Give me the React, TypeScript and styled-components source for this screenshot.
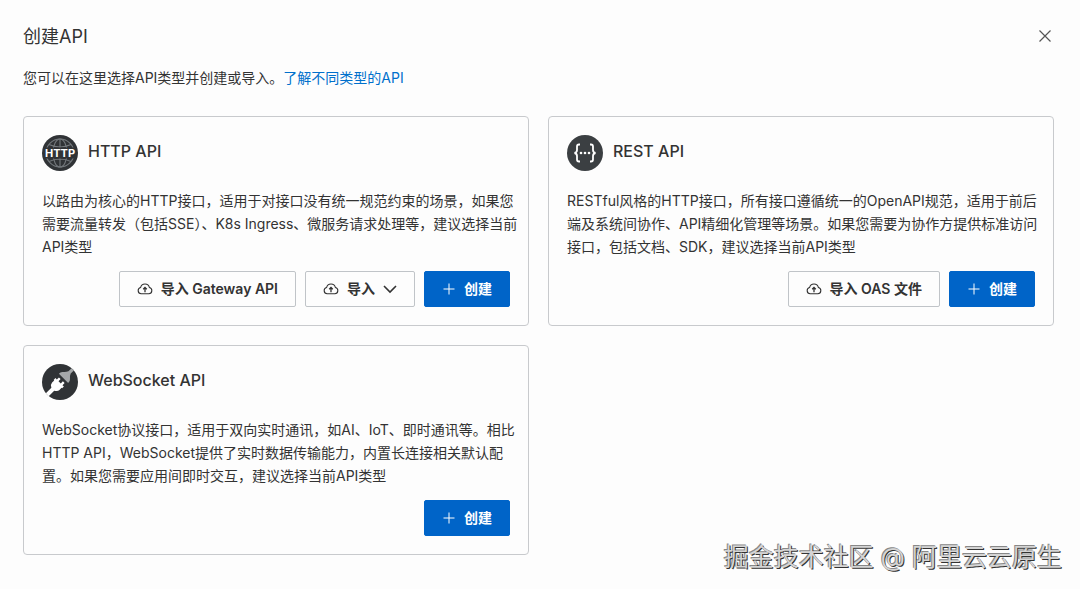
import React from "react";
import styled, { createGlobalStyle } from "styled-components";

const GlobalStyle = createGlobalStyle`
  * { box-sizing: border-box; }
  body {
    margin: 0;
    background: #fdfdfd;
    color: #333;
    font-family: Inter, "Noto Sans CJK SC", sans-serif;
    font-size: 14px;
    line-height: 23px;
  }
`;

const Panel = styled.main`
  position: relative;
  padding: 25px 26px 34px 23px;
`;

const Header = styled.header`
  display: flex;
  align-items: flex-start;
  justify-content: space-between;
`;

const Title = styled.h1`
  margin: 0;
  font-size: 18px;
  font-weight: 400;
  line-height: 24px;
`;

const CloseButton = styled.button`
  display: flex;
  padding: 4px 2px;
  border: 0;
  background: none;
  color: #555;
  cursor: pointer;
`;

const Intro = styled.p`
  margin: 17px 0 27px;
  white-space: nowrap;
`;

const Link = styled.a`
  color: #0070cc;
  text-decoration: none;
`;

const Grid = styled.div`
  display: grid;
  grid-template-columns: repeat(2, minmax(0, 1fr));
  gap: 19px;
`;

const Card = styled.section`
  display: flex;
  flex-direction: column;
  padding: 18px;
  border: 1px solid #c8cacd;
  border-radius: 4px;
`;

const CardHead = styled.div`
  display: flex;
  gap: 10px;
  height: 37px;
`;

const CardTitle = styled.h2`
  margin: 4px 0 0;
  font-size: 16px;
  font-weight: 500;
  line-height: 24px;
`;

const Description = styled.p`
  margin: 17px 0 13px;
  white-space: pre;
`;

const Actions = styled.div`
  display: flex;
  justify-content: flex-end;
  gap: 9px;
`;

const Button = styled.button<{ $primary?: boolean }>`
  display: flex;
  align-items: center;
  gap: 8px;
  height: 36px;
  padding: 0 17px;
  border: 1px solid ${(p) => (p.$primary ? "#0064c8" : "#c0c4c8")};
  border-radius: 2px;
  background: ${(p) => (p.$primary ? "#0064c8" : "#fdfdfd")};
  color: ${(p) => (p.$primary ? "#fff" : "#333")};
  font: inherit;
  font-weight: 600;
  line-height: 22px;
  white-space: nowrap;
  cursor: pointer;
`;

const Watermark = styled.div`
  position: absolute;
  right: 18px;
  bottom: 14px;
  color: #d4d4d4;
  font-size: 25px;
  line-height: 36px;
  text-shadow: 1px 1px 0 #333, -1px -1px 0 #888;
  white-space: nowrap;
`;

const CloseIcon = () => (
  <svg width="14" height="14" viewBox="0 0 14 14" fill="none" stroke="currentColor" strokeWidth="1.2" aria-hidden="true">
    <path d="M1.5 1.5l11 11M12.5 1.5l-11 11" />
  </svg>
);

const CloudIcon = () => (
  <svg width="16" height="14" viewBox="0 0 16 14" fill="none" stroke="currentColor" strokeWidth="1.1" aria-hidden="true">
    <path d="M4.6 11.8H4.2A3.2 3.2 0 0 1 3.6 5.5a4.5 4.5 0 0 1 8.8 0 3.2 3.2 0 0 1-.6 6.3H4.4" />
    <path d="M8 10.2V5.8M6.2 7.3L8 5.5l1.8 1.8" strokeWidth="1.3" />
  </svg>
);

const PlusIcon = () => (
  <svg width="14" height="14" viewBox="0 0 14 14" fill="none" stroke="currentColor" aria-hidden="true">
    <path d="M7 1.5v11M1.5 7h11" />
  </svg>
);

const ChevronIcon = () => (
  <svg width="14" height="14" viewBox="0 0 14 14" fill="none" stroke="currentColor" strokeWidth="1.6" aria-hidden="true">
    <path d="M1 4l6 6 6-6" />
  </svg>
);

const HttpIcon = () => (
  <svg width="36" height="36" viewBox="0 0 36 36" aria-hidden="true">
    <circle cx="18" cy="18" r="18" fill="#303336" />
    <g fill="none" stroke="#74797d" strokeWidth="1.1">
      <circle cx="18" cy="18" r="14" />
      <ellipse cx="18" cy="18" rx="7" ry="14" />
      <path d="M18 4v28M7 9.5q11 5 22 0M7 26.5q11-5 22 0" />
    </g>
    <rect x="1" y="12.5" width="34" height="11" fill="#303336" />
    <text x="18" y="22" textAnchor="middle" fill="#fff" fontFamily="Inter, sans-serif" fontSize="11" fontWeight="700">HTTP</text>
  </svg>
);

const RestIcon = () => (
  <svg width="36" height="36" viewBox="0 0 36 36" aria-hidden="true">
    <circle cx="18" cy="18" r="18" fill="#3b3f42" />
    <g fill="none" stroke="#fff" strokeWidth="1.8">
      <path d="M13 9.5h-1q-2 0-2 2v3.5q0 2.5-2.5 3 2.5.5 2.5 3v3.5q0 2 2 2h1" />
      <path d="M23 9.5h1q2 0 2 2v3.5q0 2.5 2.5 3-2.5.5-2.5 3v3.5q0 2-2 2h-1" />
    </g>
    <g fill="#fff">
      <circle cx="14" cy="18" r="1.3" />
      <circle cx="18" cy="18" r="1.3" />
      <circle cx="22" cy="18" r="1.3" />
    </g>
  </svg>
);

const SocketIcon = () => (
  <svg width="36" height="36" viewBox="0 0 36 36" aria-hidden="true">
    <circle cx="18" cy="18" r="18" fill="#303336" />
    <g transform="rotate(45 18 18)">
      <path d="M16.4 0h3.200v4.500q1 2.500 3.500 4.500 1.800 1.500 1.400 4H11.500q-.4-2.500 1.400-4 2.500-2 3.500-4.500z" fill="#a5a8aa" />
      <path
        d="M14 15.500h2.400v3h3.200v-3H22v3h2v2.500h-.8v3q0 2.500-3.200 4.200V36h-4v-7.800q-3.200-1.700-3.200-4.200v-3H12v-2.500h2z"
        fill="#fff"
      />
    </g>
  </svg>
);

type Action = { label: string; primary?: boolean; menu?: boolean };

const create: Action = { label: "创建", primary: true };

const cards = [
  {
    title: "HTTP API",
    Icon: HttpIcon,
    text: [
      "以路由为核心的HTTP接口，适用于对接口没有统一规范约束的场景，如果您",
      "需要流量转发（包括SSE）、K8s Ingress、微服务请求处理等，建议选择当前",
      "API类型",
    ],
    actions: [{ label: "导入 Gateway API" }, { label: "导入", menu: true }, create] as Action[],
  },
  {
    title: "REST API",
    Icon: RestIcon,
    text: [
      "RESTful风格的HTTP接口，所有接口遵循统一的OpenAPI规范，适用于前后",
      "端及系统间协作、API精细化管理等场景。如果您需要为协作方提供标准访问",
      "接口，包括文档、SDK，建议选择当前API类型",
    ],
    actions: [{ label: "导入 OAS 文件" }, create] as Action[],
  },
  {
    title: "WebSocket API",
    Icon: SocketIcon,
    text: [
      "WebSocket协议接口，适用于双向实时通讯，如AI、IoT、即时通讯等。相比",
      "HTTP API，WebSocket提供了实时数据传输能力，内置长连接相关默认配",
      "置。如果您需要应用间即时交互，建议选择当前API类型",
    ],
    actions: [create],
  },
];

export default function App() {
  return (
    <Panel lang="zh-CN">
      <GlobalStyle />
      <Header>
        <Title>创建API</Title>
        <CloseButton type="button" aria-label="关闭">
          <CloseIcon />
        </CloseButton>
      </Header>
      <Intro>
        您可以在这里选择API类型并创建或导入。<Link href="#types">了解不同类型的API</Link>
      </Intro>
      <Grid>
        {cards.map(({ title, Icon, text, actions }) => (
          <Card key={title}>
            <CardHead>
              <Icon />
              <CardTitle>{title}</CardTitle>
            </CardHead>
            <Description>{text.join("\n")}</Description>
            <Actions>
              {actions.map(({ label, primary, menu }) => (
                <Button key={label} type="button" $primary={primary}>
                  {primary ? <PlusIcon /> : <CloudIcon />}
                  {label}
                  {menu && <ChevronIcon />}
                </Button>
              ))}
            </Actions>
          </Card>
        ))}
      </Grid>
      <Watermark>掘金技术社区 @ 阿里云云原生</Watermark>
    </Panel>
  );
}
